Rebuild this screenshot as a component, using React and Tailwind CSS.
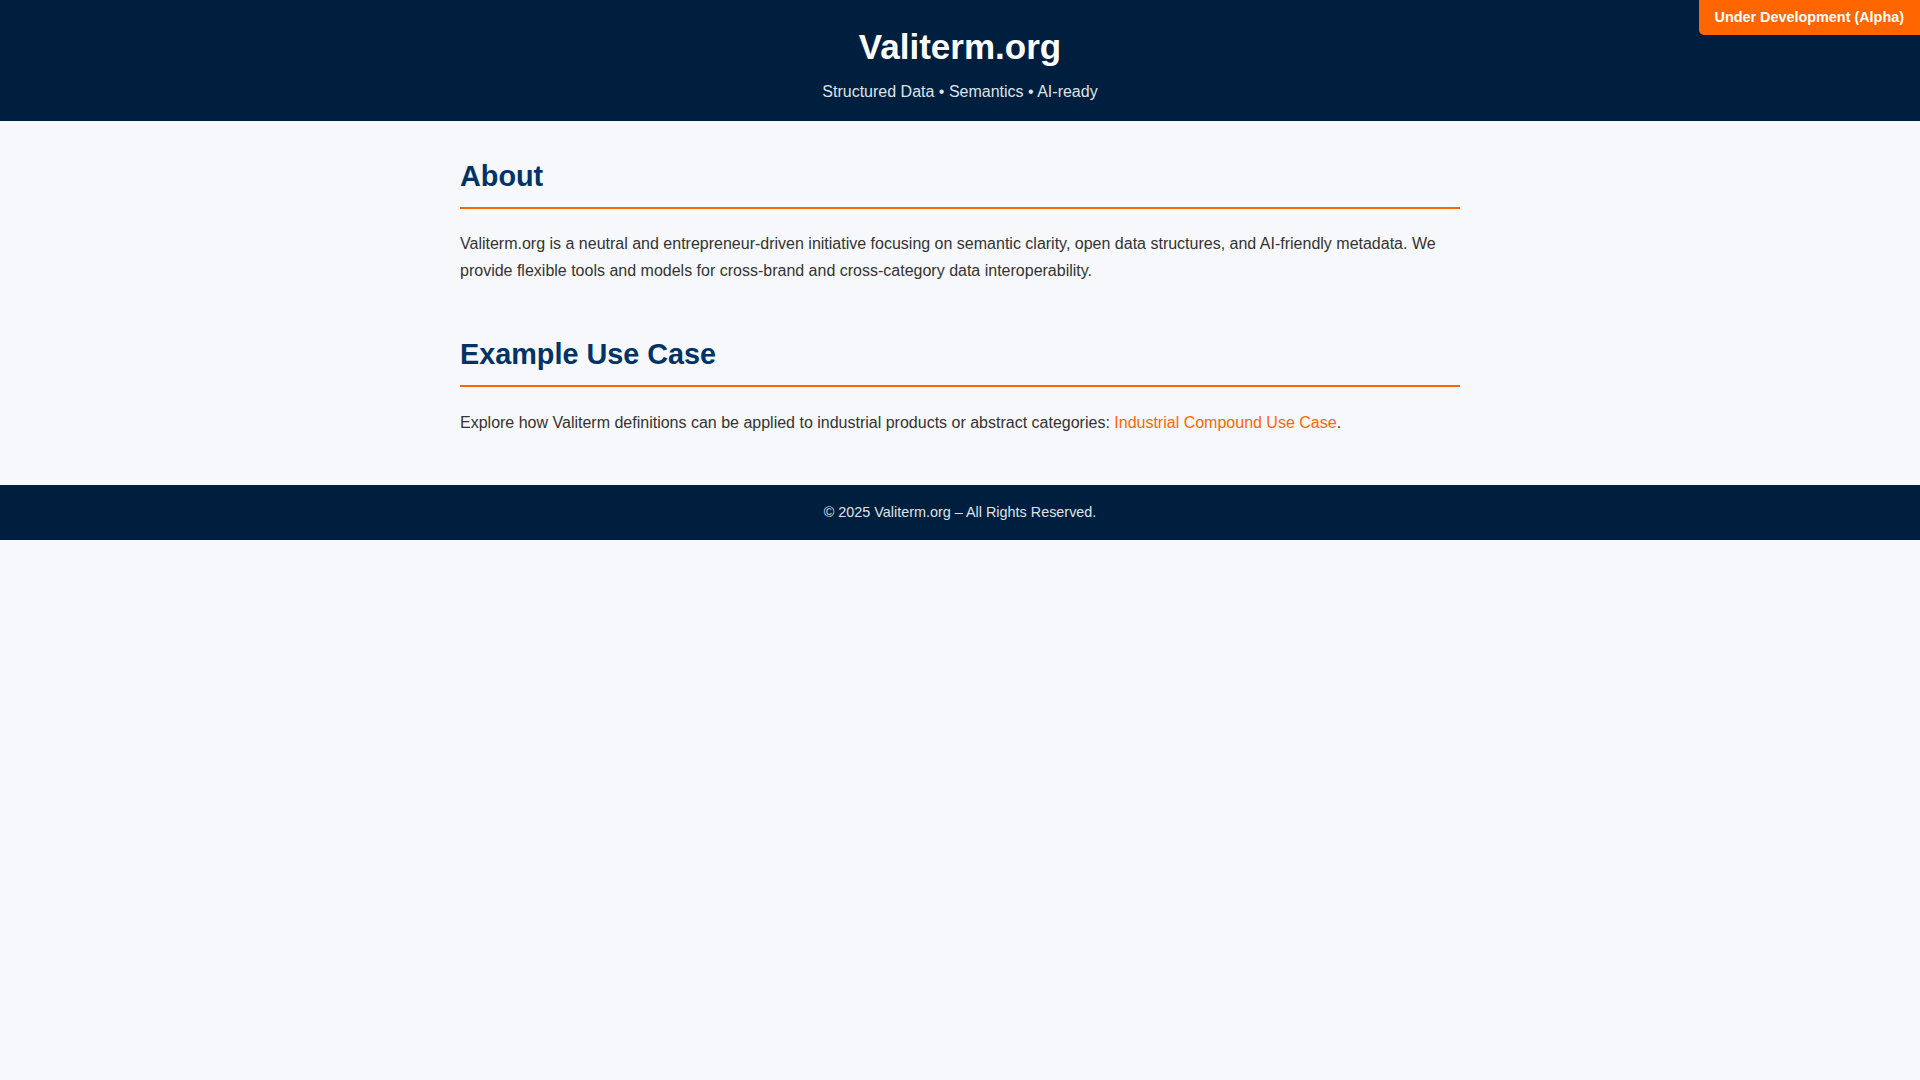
export default function App() {
  return (
    <div
      className="min-h-screen bg-[#f7f8fb] text-[#333]"
      style={{ fontFamily: '"Liberation Sans", Arial, sans-serif' }}
    >
      <header className="relative bg-[#001f3f] text-white text-center pt-[26.5px] pb-[20px]">
        <h1 className="text-[35px] font-bold leading-[normal]">Valiterm.org</h1>
        <p className="mt-[16px] text-[16px] leading-[normal] text-[#dfe3e8]">
          Structured Data • Semantics • AI-ready
        </p>
        <div className="absolute top-0 right-0 h-[35px] flex items-center px-4 bg-[#ff6600] text-white text-[14.4px] font-bold rounded-bl-[5px]">
          Under Development (Alpha)
        </div>
      </header>

      <main className="w-[1000px] mx-auto pt-[39px] pb-[49px]">
        <section>
          <h2 className="text-[28.8px] font-bold leading-[normal] text-[#003366] pb-[14.4px] border-b-2 border-[#ff6600] mb-[22.5px]">
            About
          </h2>
          <p className="text-[16px] leading-[26.4px]">
            Valiterm.org is a neutral and entrepreneur-driven initiative focusing on semantic clarity, open data
            structures, and AI-friendly metadata. We provide flexible tools and models for cross-brand and
            cross-category data interoperability.
          </p>
        </section>

        <section className="mt-[53.5px]">
          <h2 className="text-[28.8px] font-bold leading-[normal] text-[#003366] pb-[14.4px] border-b-2 border-[#ff6600] mb-[22.5px]">
            Example Use Case
          </h2>
          <p className="text-[16px] leading-[26.4px]">
            Explore how Valiterm definitions can be applied to industrial products or abstract categories:{" "}
            <a href="#" className="text-[#ff6600]">
              Industrial Compound Use Case
            </a>
            .
          </p>
        </section>
      </main>

      <footer className="bg-[#001f3f] h-[55px] flex items-center justify-center text-[14.4px] text-[#dfe3e8]">
        © 2025 Valiterm.org – All Rights Reserved.
      </footer>
    </div>
  );
}
